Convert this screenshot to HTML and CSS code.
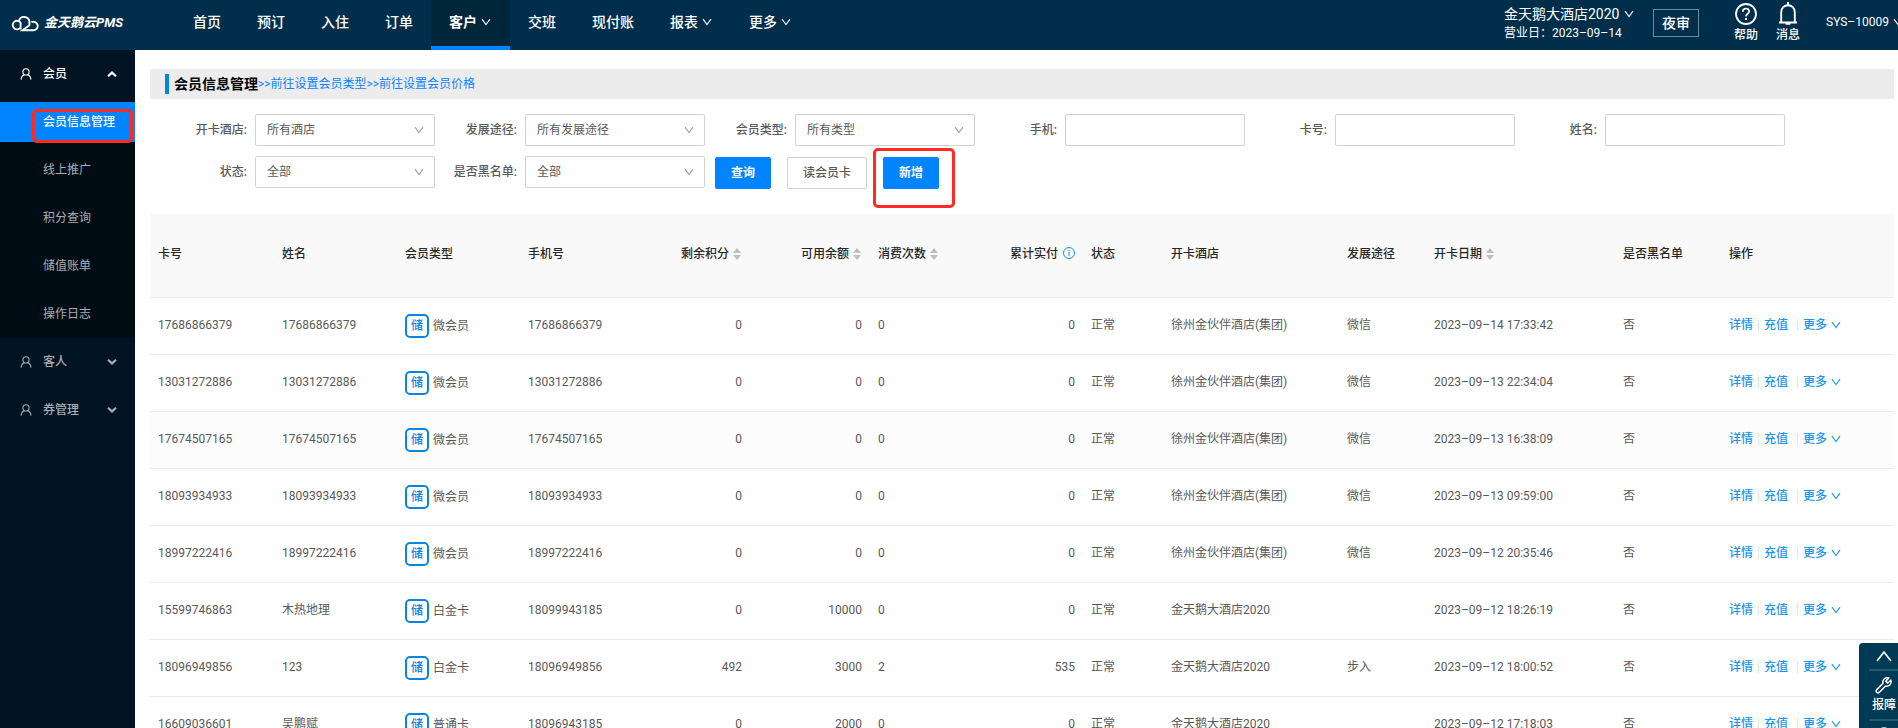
FILE: index.html
```html
<!DOCTYPE html>
<html lang="zh-CN">
<head>
<meta charset="utf-8">
<title>会员信息管理</title>
<link rel="stylesheet" href="styles.css">
</head>
<body>
<svg class="defs" aria-hidden="true">
  <symbol id="down" viewBox="0 0 12 12"><path d="M2 3.2 6 8.6 10 3.200" fill="none" stroke="currentColor" stroke-width="1.1"/></symbol>
  <symbol id="chev" viewBox="0 0 12 12"><path d="M2 3.8 6 7.4 10 3.8" fill="none" stroke="currentColor" stroke-width="2.2"/></symbol>
  <symbol id="user" viewBox="0 0 12 12"><circle cx="6" cy="3.9" r="3.1" fill="none" stroke="currentColor" stroke-width="1.1"/><path d="M1.1 11.6C1.3 8.6 3 7.2 4.6 6.6M7.4 6.6c1.6.6 3.3 2 3.5 5" fill="none" stroke="currentColor" stroke-width="1.1"/></symbol>
  <symbol id="sort" viewBox="0 0 8 12"><path d="M4 0 8 5H0zM4 12 0 7h8z" fill="currentColor"/></symbol>
</svg>
<header class="top">
  <a class="logo" href="#">
    <svg class="logo-mark" viewBox="0 0 28 18"><path d="M9.600 13.500A4.300 4.300 0 1 1 9.600 8.700V15.500M8 6.600A5.400 5.400 0 0 1 18.400 7.200V11.200L11.500 16.300H22.800A4.300 4.300 0 1 0 20.400 8.200" fill="none" stroke="currentColor" stroke-width="1.900"/></svg>
    <span>金天鹅云PMS</span>
  </a>
  <nav class="nav">
    <a href="#">首页</a>
    <a href="#">预订</a>
    <a href="#">入住</a>
    <a href="#">订单</a>
    <a href="#" class="current">客户<svg class="ico"><use href="#down"/></svg></a>
    <a href="#">交班</a>
    <a href="#">现付账</a>
    <a href="#">报表<svg class="ico"><use href="#down"/></svg></a>
    <a href="#">更多<svg class="ico"><use href="#down"/></svg></a>
  </nav>
  <div class="tools">
    <div class="hotel">
      <div class="hotel-name">金天鹅大酒店2020<svg class="ico"><use href="#down"/></svg></div>
      <div class="hotel-day">营业日：2023–09–14</div>
    </div>
    <button class="audit" type="button">夜审</button>
    <a class="tool" href="#">
      <svg viewBox="0 0 24 24"><circle cx="12" cy="12" r="10" fill="none" stroke="currentColor" stroke-width="1.8"/><path d="M8.8 9.8c0-4.4 6.4-4.2 6.4-.4 0 2.4-3.2 2.4-3.2 5" fill="none" stroke="currentColor" stroke-width="1.7"/><path d="M11 16h2v2h-2z" fill="currentColor"/></svg>
      帮助
    </a>
    <a class="tool" href="#">
      <svg viewBox="0 0 24 24"><path d="M3 20.500h18M5.200 20.500V10a6.800 6.800 0 0 1 13.600 0v10.500M12 3V0M9.600 21.700h4.800" fill="none" stroke="currentColor" stroke-width="1.9"/></svg>
      消息
    </a>
    <a class="account" href="#">SYS–10009<svg class="ico"><use href="#down"/></svg></a>
  </div>
</header>
<div class="shell">
  <aside class="side">
    <a class="group open" href="#"><svg class="ico"><use href="#user"/></svg><span>会员</span><svg class="ico turn"><use href="#chev"/></svg></a>
    <div class="sub">
      <a class="on" href="#">会员信息管理<i class="mark"></i></a>
      <a href="#">线上推广</a>
      <a href="#">积分查询</a>
      <a href="#">储值账单</a>
      <a href="#">操作日志</a>
    </div>
    <a class="group" href="#"><svg class="ico"><use href="#user"/></svg><span>客人</span><svg class="ico"><use href="#chev"/></svg></a>
    <a class="group" href="#"><svg class="ico"><use href="#user"/></svg><span>券管理</span><svg class="ico"><use href="#chev"/></svg></a>
  </aside>
  <main class="main">
    <div class="title"><h1>会员信息管理</h1><a href="#">&gt;&gt;前往设置会员类型</a><a href="#">&gt;&gt;前往设置会员价格</a></div>
    <form class="filters">
      <div class="field"><label for="f1">开卡酒店:</label><div class="pick"><select id="f1"><option>所有酒店</option></select><svg class="ico"><use href="#down"/></svg></div></div>
      <div class="field"><label for="f2">发展途径:</label><div class="pick"><select id="f2"><option>所有发展途径</option></select><svg class="ico"><use href="#down"/></svg></div></div>
      <div class="field"><label for="f3">会员类型:</label><div class="pick"><select id="f3"><option>所有类型</option></select><svg class="ico"><use href="#down"/></svg></div></div>
      <div class="field"><label for="f4">手机:</label><input id="f4" type="text"></div>
      <div class="field"><label for="f5">卡号:</label><input id="f5" type="text"></div>
      <div class="field"><label for="f6">姓名:</label><input id="f6" type="text"></div>
      <div class="field"><label for="f7">状态:</label><div class="pick"><select id="f7"><option>全部</option></select><svg class="ico"><use href="#down"/></svg></div></div>
      <div class="field"><label for="f8">是否黑名单:</label><div class="pick"><select id="f8"><option>全部</option></select><svg class="ico"><use href="#down"/></svg></div></div>
      <div class="actions">
        <button class="btn primary" type="button">查询</button>
        <button class="btn" type="button">读会员卡</button>
        <span class="marked"><button class="btn primary" type="button">新增</button><i class="mark"></i></span>
      </div>
    </form>
    <table class="grid">
      <colgroup><col class="w124"><col class="w123"><col class="w123"><col class="w123"><col class="w107"><col class="w120"><col class="w213"><col class="w80"><col class="w176"><col class="w87"><col class="w189"><col class="w106"><col></colgroup>
      <thead>
        <tr><th>卡号</th><th>姓名</th><th>会员类型</th><th>手机号</th><th class="num">剩余积分<svg class="sort"><use href="#sort"/></svg></th><th class="num">可用余额<svg class="sort"><use href="#sort"/></svg></th><th><div class="pair"><span>消费次数<svg class="sort"><use href="#sort"/></svg></span><span>累计实付<svg class="info" viewBox="0 0 12 12"><circle cx="6" cy="6" r="5.5" fill="none" stroke="currentColor"/><path d="M6 5v4M6 2.8v1.2" fill="none" stroke="currentColor"/></svg></span></div></th><th>状态</th><th>开卡酒店</th><th>发展途径</th><th>开卡日期<svg class="sort"><use href="#sort"/></svg></th><th>是否黑名单</th><th>操作</th></tr>
      </thead>
      <tbody id="rows"></tbody>
    </table>
  </main>
</div>
<div class="float">
  <a href="#" aria-label="返回顶部"><svg class="up" viewBox="0 0 16 12"><path d="M1 11 8 2l7 9" fill="none" stroke="currentColor" stroke-width="1.6"/></svg></a>
  <a href="#"><svg class="wrench" viewBox="0 0 18 18"><path d="M15.8 4.2 12.6 7 10.8 5.200 13.6 2A4.400 4.400 0 0 0 8 7.400L1.800 13.600a1.800 1.800 0 0 0 2.600 2.600L10.600 10A4.400 4.400 0 0 0 15.800 4.200z" fill="none" stroke="currentColor" stroke-width="1.500"/></svg>报障</a>
  <a href="#" aria-label="客服"><svg class="wrench" viewBox="0 0 18 18"><circle cx="9" cy="9" r="7" fill="none" stroke="currentColor" stroke-width="1.500"/></svg></a>
</div>
<script src="rows.js"></script>
</body>
</html>
```
FILE: rows.js
```js
const group = '徐州金伙伴酒店(集团)';
const swan = '金天鹅大酒店2020';
const members = [
  ['17686866379', '17686866379', '微会员', '17686866379', 0, 0, 0, 0, group, '微信', '2023–09–14 17:33:42'],
  ['13031272886', '13031272886', '微会员', '13031272886', 0, 0, 0, 0, group, '微信', '2023–09–13 22:34:04'],
  ['17674507165', '17674507165', '微会员', '17674507165', 0, 0, 0, 0, group, '微信', '2023–09–13 16:38:09'],
  ['18093934933', '18093934933', '微会员', '18093934933', 0, 0, 0, 0, group, '微信', '2023–09–13 09:59:00'],
  ['18997222416', '18997222416', '微会员', '18997222416', 0, 0, 0, 0, group, '微信', '2023–09–12 20:35:46'],
  ['15599746863', '木热地理', '白金卡', '18099943185', 0, 10000, 0, 0, swan, '', '2023–09–12 18:26:19'],
  ['18096949856', '123', '白金卡', '18096949856', 492, 3000, 2, 535, swan, '步入', '2023–09–12 18:00:52'],
  ['16609036601', '吴鹏赋', '普通卡', '18096943185', 0, 2000, 0, 0, swan, '', '2023–09–12 17:18:03']
];
document.getElementById('rows').innerHTML = members.map((m, i) => `
<tr${i === 2 ? ' class="hover"' : ''}>
<td>${m[0]}</td><td>${m[1]}</td>
<td class="kind"><span class="badge">储</span>${m[2]}</td>
<td>${m[3]}</td><td class="num">${m[4]}</td><td class="num">${m[5]}</td>
<td><div class="pair"><span>${m[6]}</span><span>${m[7]}</span></div></td>
<td>正常</td><td>${m[8]}</td><td>${m[9]}</td><td>${m[10]}</td><td>否</td>
<td><div class="ops"><a href="#">详情</a><a href="#">充值</a><a href="#" class="more">更多<svg class="ico"><use href="#down"/></svg></a></div></td>
</tr>`).join('');
```
FILE: styles.css
```css
* { box-sizing: border-box; }
body {
  margin: 0;
  height: 100vh;
  display: flex;
  flex-direction: column;
  overflow: hidden;
  background: #fff;
  color: #595959;
  font: 12px/18px Roboto, "Noto Sans CJK SC", sans-serif;
}
a { color: inherit; text-decoration: none; }
button, input, select { font: inherit; color: inherit; }
.defs { position: absolute; width: 0; height: 0; }
.ico { width: 12px; height: 12px; flex: none; }

.top {
  display: flex;
  flex: none;
  height: 50px;
  overflow: hidden;
  white-space: nowrap;
  background: #002e4b;
  color: #fff;
}
.logo {
  display: flex;
  align-items: center;
  width: 175px;
  padding: 0 0 4px 11px;
  gap: 5px;
  flex: none;
  font-size: 13px;
  font-weight: 700;
  font-style: italic;
}
.logo-mark { width: 28px; height: 18px; }
.nav { display: flex; font-size: 14px; font-weight: 500; }
.nav a {
  display: flex;
  align-items: center;
  gap: 3px;
  padding: 0 18px 6px;
}
.nav .current {
  padding-bottom: 2px;
  border-bottom: 4px solid #0084ff;
  background: #00263a;
  font-weight: 700;
}
.tools { display: flex; margin-left: auto; width: 394px; flex: none; }
.tools > * { flex: none; }
.hotel { width: 149px; padding-top: 4px; }
.hotel-name { display: flex; align-items: center; gap: 4px; font-size: 14px; line-height: 20px; }
.audit {
  width: 46px;
  height: 28px;
  margin-top: 9px;
  padding: 0;
  border: 1px solid #6f8c9f;
  background: none;
  font-size: 14px;
  font-weight: 500;
}
.tool {
  display: flex;
  flex-direction: column;
  align-items: center;
  width: 42px;
  padding-top: 2px;
  font-weight: 500;
}
.tool svg { width: 24px; height: 24px; }
.audit + .tool { margin-left: 26px; }
.account { display: flex; align-items: center; gap: 3px; margin-left: 17px; padding-bottom: 6px; }

.shell { display: flex; flex: 1; min-height: 0; }
.side {
  width: 135px;
  flex: none;
  padding-top: 4px;
  background: #001424;
  color: #a6adb4;
}
.group {
  display: flex;
  align-items: center;
  height: 40px;
  margin-bottom: 8px;
  padding: 0 17px 0 20px;
  gap: 11px;
  font-weight: 500;
}
.group span { flex: 1; }
.open { color: #fff; }
.turn { transform: rotate(180deg); }
.sub {
  display: flex;
  flex-direction: column;
  gap: 8px;
  margin-bottom: 4px;
  padding-bottom: 4px;
  background: #000d15;
}
.sub a { position: relative; height: 40px; padding-left: 43px; line-height: 40px; }
.sub .on { background: #0084ff; color: #fff; font-weight: 500; }
.mark {
  position: absolute;
  border: 3px solid #ff2a22;
  border-radius: 5px;
  pointer-events: none;
}
.sub .mark { inset: 7px 2px -1px 32px; }

.main {
  flex: 1;
  min-width: 0;
  padding: 19px 4px 0 15px;
  overflow: auto;
  scrollbar-width: none;
}
.title {
  display: flex;
  align-items: center;
  height: 30px;
  padding-left: 15px;
  background: #ececec;
  color: #0a84ff;
}
.title h1 {
  margin: 0;
  padding-left: 5px;
  border-left: 4px solid #0084e8;
  color: #000;
  font-size: 14px;
  line-height: 20px;
}
.filters {
  display: flex;
  flex-wrap: wrap;
  row-gap: 10px;
  padding: 15px 0 25px 15px;
}
.field { display: flex; align-items: center; width: 270px; height: 32px; gap: 8px; }
.field label { flex: 1; text-align: right; font-weight: 500; }
.pick { position: relative; width: 180px; }
.pick select, .field input {
  display: block;
  width: 180px;
  height: 32px;
  padding: 0 11px;
  border: 1px solid #d0d0d0;
  border-radius: 2px;
  background: #fff;
  appearance: none;
}
.pick .ico { position: absolute; top: 10px; right: 10px; color: #a0a0a0; }
.actions { display: flex; gap: 16px; padding: 1px 0 0 10px; }
.btn {
  height: 32px;
  padding: 0 15px;
  border: 1px solid #d0d0d0;
  border-radius: 2px;
  background: #fff;
  font-weight: 500;
}
.primary { border-color: #0084ff; background: #0084ff; color: #fff; font-weight: 700; }
.marked { position: relative; }
.marked .mark { inset: -9px -16px -19px -10px; }

.grid { width: 100%; border-collapse: separate; border-spacing: 0; table-layout: fixed; }
.grid th, .grid td {
  height: 57px;
  padding: 0 8px 3px;
  border-bottom: 1px solid #ebebeb;
  text-align: left;
  font-weight: 400;
  white-space: nowrap;
}
.grid th { height: 84px; background: #f9f9f9; color: #262626; font-weight: 500; }
.grid .num { text-align: right; }
.grid .kind { padding-bottom: 1px; }
.hover td { background: #fcfcfc; }
.w124 { width: 124px; }
.w123 { width: 123px; }
.w107 { width: 107px; }
.w120 { width: 120px; }
.w213 { width: 213px; }
.w80 { width: 80px; }
.w176 { width: 176px; }
.w87 { width: 87px; }
.w189 { width: 189px; }
.w106 { width: 106px; }
.pair { display: flex; justify-content: space-between; }
.sort { width: 8px; height: 12px; margin: 0 1px 0 4px; vertical-align: -2px; color: #bfbfbf; }
.info { width: 12px; height: 12px; margin-left: 5px; vertical-align: -1px; color: #1890ff; }
.badge {
  display: inline-block;
  width: 24px;
  height: 24px;
  margin-right: 4px;
  border: 2px solid #0a84e0;
  border-radius: 5px;
  color: #0a84e0;
  line-height: 20px;
  text-align: center;
  font-weight: 500;
}
.ops { display: flex; align-items: center; color: #1a96e8; font-weight: 500; }
.ops a + a { margin-left: 5px; padding-left: 5px; border-left: 1px solid #e8e8e8; line-height: 12px; }
.ops .more { display: flex; align-items: center; gap: 3px; }
.ops a.more { margin-left: 9px; }

.float {
  position: fixed;
  right: -11px;
  bottom: 0;
  width: 50px;
  height: 85px;
  padding: 0 0 0 10px;
  overflow: hidden;
  border-radius: 4px 0 0 0;
  background: #003a54;
  color: #fff;
  font-weight: 500;
}
.float a {
  display: flex;
  flex-direction: column;
  align-items: center;
  padding: 5px 10px 5px 0;
  border-bottom: 2px solid #245a70;
}
.up { width: 16px; height: 12px; margin: 2px 0; }
.wrench { width: 18px; height: 18px; margin-bottom: 2px; }
```
